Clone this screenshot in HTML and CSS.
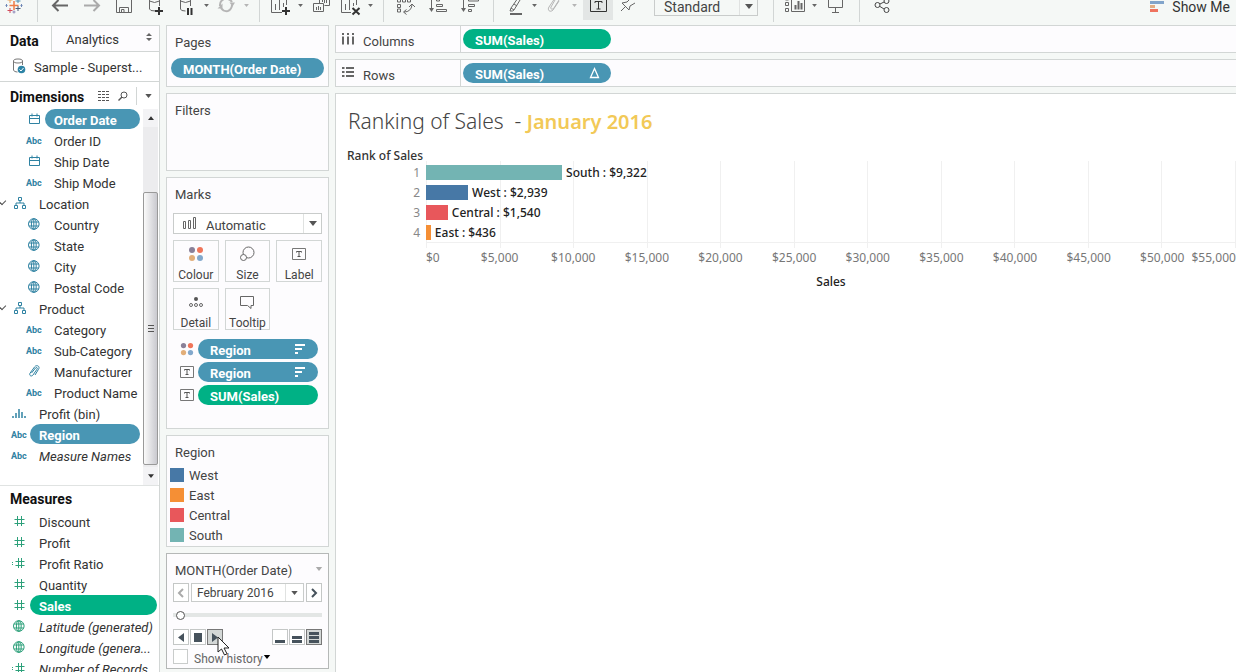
FILE: index.html
```html
<!DOCTYPE html>
<html lang="en">
<head>
<meta charset="utf-8">
<title>Ranking of Sales</title>
<link rel="stylesheet" href="styles.css">
</head>
<body>
<svg class="sprite" aria-hidden="true">
  <symbol id="caret" viewBox="0 0 8 5"><path d="M0 0h8L4 5z" fill="currentColor"/></symbol>
  <symbol id="calendar" viewBox="0 0 14 14"><path d="M2.500 3.500h10v8h-10zM2.500 6.500h10M5 1.500v3M10 1.500v3" fill="none" stroke="currentColor"/></symbol>
  <symbol id="globe" viewBox="0 0 14 14"><path d="M1.500 7a5.300 5.300 0 1 0 10.600 0a5.300 5.300 0 1 0-10.600 0M4.400 7a2.400 5.300 0 1 0 4.800 0a2.400 5.300 0 1 0-4.800 0M2 5h9.600M2 9h9.600M6.800 1.700v10.600" fill="none" stroke="currentColor"/></symbol>
  <symbol id="tree" viewBox="0 0 14 14"><path d="M5.500 1.500h3v3h-3zM1.500 9.500h3v3h-3zM9.500 9.500h3v3h-3zM7 4.500V7M3 9.500V7h8v2.500" fill="none" stroke="currentColor"/></symbol>
  <symbol id="clip" viewBox="0 0 14 14"><path d="M4.500 9L8.500 4c1-1.200 2.500-.2 1.500 1.200L6 11c-1.500 2-4.200.6-3-1.800L7.500 3c2-2.800 6-.8 4 2.300L8 11" fill="none" stroke="currentColor"/></symbol>
  <symbol id="bins" viewBox="0 0 14 14"><path d="M1 10v2M4 7v5M7 3v9M10 6v6M13 10v2" fill="none" stroke="currentColor" stroke-width="1.500"/></symbol>
  <symbol id="hash" viewBox="0 0 14 14"><path d="M5.500 2v10M9.500 2v10M2.500 5.500h10M2.500 9.500h10" fill="none" stroke="currentColor"/></symbol>
  <symbol id="calc-hash" viewBox="0 0 14 14"><path d="M6.500 2v10M9.500 2v10M3.500 5.500h9M3.500 9.500h9M-2 6.500h3M-2 8.500h3" fill="none" stroke="currentColor"/></symbol>
  <symbol id="text-box" viewBox="0 0 14 14"><path d="M.5 1.500h13v11H.5z" fill="none" stroke="#777"/><path d="M4.500 5.500v-1h5v1M7 4.500v5M5.500 9.500h3" fill="none" stroke="#555"/></symbol>
  <symbol id="dots" viewBox="0 0 16 16"><circle cx="4" cy="4" r="3" fill="#8a8098"/><circle cx="12" cy="4" r="3" fill="#f0755a"/><circle cx="4" cy="12" r="3" fill="#e2ae79"/><circle cx="12" cy="12" r="3" fill="#82a8cc"/></symbol>
  <symbol id="sort" viewBox="0 0 12 12"><path d="M1 2h10M1 6h7M1 10h3" fill="none" stroke="#fff" stroke-width="2"/></symbol>
</svg>

<header class="toolbar">
  <button class="tool logo" aria-label="Start page"><svg viewBox="0 0 32 25"><path d="M16 1v9M11.500 5.500h9" stroke="#ee7b45" stroke-width="1.500"/><path d="M20 -2v5M17.500 1h5" stroke="#4e8fb0"/><path d="M12 8v5M9.500 10.500h5" stroke="#d24c5c"/><path d="M20 6v5M17.500 8.500h5" stroke="#4b5c78"/><path d="M12 -2v5M9.500 0h5" stroke="#e9a25b"/><path d="M16 10.500v3M14.500 12h3" stroke="#8c87b8"/><path d="M8.500 4v3M7.500 5.500h2M23.500 4v3M22.500 5.500h2" stroke="#6f87b6"/></svg></button>
  <span class="divider"></span>
  <button class="tool" aria-label="Back"><svg viewBox="0 0 32 25"><path d="M24 5.500H9M14.500 0L9 5.500l5.500 5.500" stroke="#666" stroke-width="2"/></svg></button>
  <button class="tool" aria-label="Forward"><svg viewBox="0 0 32 25"><path d="M8 5.500h15M17.500 0L23 5.500 17.500 11" stroke="#aaa" stroke-width="2"/></svg></button>
  <button class="tool" aria-label="Save"><svg viewBox="0 0 32 25"><path d="M8.500-2v14.500h15V-2M11.500 12V7.500h9V12M13.500 12V9.500h2.500V12"/></svg></button>
  <button class="tool" aria-label="New data source"><svg viewBox="0 0 32 25"><path d="M9.500-2v11q0 2 6 2M19.500-2v8M9.500 1q5 3 10 0"/><path d="M19 7v8M15 11h8" stroke="#333" stroke-width="2"/></svg></button>
  <button class="tool narrow" aria-label="Pause updates"><svg viewBox="0 0 32 25"><path d="M10.500-2v11q0 2 5 2M20.500-2v8M10.500 1q5 3 10 0"/><path d="M18 8v7M21.500 8v7" stroke="#333" stroke-width="2"/></svg></button>
  <button class="more" aria-label="More"><svg><use href="#caret"/></svg></button>
  <button class="tool narrow faded" aria-label="Refresh"><svg viewBox="0 0 32 25"><path d="M10 6a7 7 0 0 1 4-7M22 5a7 7 0 0 1-4 6M11 8a7 7 0 0 0 7 3M22 2a7 7 0 0 0-4-3" stroke-width="2"/><path d="M7.500 8.500h5v-5zM19.500 2.500h5.500l-2.500 4z" fill="#b5b5b5" stroke="none"/></svg></button>
  <button class="more faded" aria-label="More"><svg><use href="#caret"/></svg></button>
  <span class="divider"></span>
  <button class="tool narrow" aria-label="New worksheet"><svg viewBox="0 0 32 25"><path d="M7.500-2v14.500H18M22.500-2v7M11.500 4v6M15.500 0v10M19.500 3v4" /><path d="M22 7v8M18 11h8" stroke="#333" stroke-width="2"/></svg></button>
  <button class="more" aria-label="More"><svg><use href="#caret"/></svg></button>
  <button class="tool duplicate" aria-label="Duplicate"><svg viewBox="0 0 32 25"><path d="M14.500 3V-2M14.500-2M24.500-2v7.500h-5M8.500 3.500h10v8h-10zM11.500 7v3M13.500 6v4M15.500 7v3M17.500 0v2M19.500 0v3M21.500 0v3"/></svg></button>
  <button class="tool narrow" aria-label="Clear sheet"><svg viewBox="0 0 32 25"><path d="M7.500-2v14.500H17M22.500-2v7M11.500 4v6M15.500 0v10M19.500 3v3"/><path d="M18.500 8l7 6.500M25.500 8l-7 6.500" stroke="#333" stroke-width="2"/></svg></button>
  <button class="more" aria-label="More"><svg><use href="#caret"/></svg></button>
  <span class="divider"></span>
  <button class="tool" aria-label="Swap rows and columns"><svg viewBox="0 0 32 25"><path d="M7.500-1v3h3v-3M12.500-1v3h3v-3M17.500-1v3h3v-3M7.500 4.500v3h3v-3zM7.500 9v3h3V9zM14 12q7 0 8-7M16.500 9.500L13.500 12l3 2.500M19 7l3-3 3 3"/></svg></button>
  <button class="tool" aria-label="Sort ascending"><svg viewBox="0 0 32 25"><path d="M9.500-2v12M14.500-1h3v2h-3zM14.500 4.500h6v2h-6zM14.500 9.500h10v2h-10z"/><path d="M7 8h5l-2.500 4z" fill="#666" stroke="none"/></svg></button>
  <button class="tool" aria-label="Sort descending"><svg viewBox="0 0 32 25"><path d="M9.500-2v12M14.500-1h10v2h-10zM14.500 4.500h6v2h-6zM14.500 9.500h3v2h-3z"/><path d="M7 8h5l-2.500 4z" fill="#666" stroke="none"/></svg></button>
  <span class="divider"></span>
  <button class="tool narrow" aria-label="Highlight"><svg viewBox="0 0 32 25"><path d="M20-2l-7 10 3 2 6-10M13 8l-1 3h2.500l1.500-1M16 4l3 2"/><path d="M12 14h12" stroke-width="2"/></svg></button>
  <button class="more" aria-label="More"><svg><use href="#caret"/></svg></button>
  <button class="tool narrow faded" aria-label="Group"><svg viewBox="0 0 32 25"><path d="M13 7l4-7M16 8l5-8c1-3-2-4-4-2l-6 9c-2 3 1 6 4 3l6-9M13 7c-1 2 1 3 3 1"/></svg></button>
  <button class="more faded" aria-label="More"><svg><use href="#caret"/></svg></button>
  <button class="tool narrow pressed" aria-label="Show mark labels"><svg viewBox="0 0 32 25"><path d="M8.500-3v14.500h16V-3" stroke="#333"/><path d="M13 3V1.500h7V3M16.500 1.500V9M14.500 9h4" stroke="#333"/></svg></button>
  <button class="tool narrow" aria-label="Pin axes"><svg viewBox="0 0 32 25"><path d="M20-2l-4 4-5 1 7 7 1-4 5-3M15 6l-5 5"/></svg></button>
  <label class="pick fit"><select aria-label="Fit"><option>Standard</option></select><span class="pick-arrow"><svg><use href="#caret"/></svg></span></label>
  <span class="divider wide"></span>
  <button class="tool narrow" aria-label="Show cards"><svg viewBox="0 0 32 25"><path d="M7.500-2v2h3v-2M7.500 2.500h3v3h-3zM7.500 8.500h3v3h-3zM13.500-2v13.500h13V-2"/><path d="M17.500 5v4.500M20.500 1v8.500M23.500 3v6.500" stroke-width="2"/></svg></button>
  <button class="more" aria-label="More"><svg><use href="#caret"/></svg></button>
  <button class="tool" aria-label="Presentation mode"><svg viewBox="0 0 32 25"><path d="M8.500-2v9.500h14V-2M15.500 8v4.500M12 12.500h7"/></svg></button>
  <span class="divider"></span>
  <button class="tool" aria-label="Share"><svg viewBox="0 0 32 25"><g stroke="#444"><circle cx="11.500" cy="5" r="2.500"/><circle cx="20.500" cy="1" r="2.500"/><circle cx="20.500" cy="10" r="2.500"/><path d="M14 4l4-2M14 6.500l4 2.500"/></g></svg></button>
  <button class="show-me"><svg viewBox="0 0 14 25"><path d="M0 1h14v3H0z" fill="#82a5cb"/><path d="M0 5h5v3H0z" fill="#e2ae85"/><path d="M0 9h8v3H0z" fill="#ef735f"/></svg><span>Show Me</span></button>
</header>

<main class="workspace">
  <aside class="data-pane">
    <div class="tabs">
      <button class="tab active">Data</button>
      <button class="tab">Analytics <svg viewBox="0 0 6 8"><path d="M0 3l3-3 3 3zM0 5l3 3 3-3z" fill="#666"/></svg></button>
    </div>
    <button class="source"><svg viewBox="0 0 14 16"><path d="M1.500 3v9c0 1 2 2 4 2M10.500 3v4M1.500 3a4.500 2 0 1 0 9 0a4.500 2 0 1 0-9 0" fill="none" stroke="#777"/><circle cx="9.500" cy="11.500" r="3.800" fill="#2e84a6"/><path d="M7.500 11.500l1.500 1.500 2.500-3" stroke="#fff" fill="none"/></svg><span>Sample - Superst...</span></button>
    <div class="pane-head">
      <h2>Dimensions</h2>
      <button aria-label="View data"><svg class="i-table" viewBox="0 0 12 10"><path d="M0 .5h12M0 3.500h12M0 6.500h12M0 9.500h12" stroke="#555" stroke-dasharray="3 1"/></svg></button>
      <button aria-label="Find"><svg class="i-find" viewBox="0 0 10 10"><circle cx="6" cy="4" r="3" fill="none" stroke="#555"/><path d="M4 6L.5 9.500" stroke="#555" stroke-width="1.500"/></svg></button>
      <button class="pane-menu" aria-label="Menu"><svg><use href="#caret"/></svg></button>
    </div>
    <div class="dimensions">
      <ul class="fields">
        <li class="child"><svg><use href="#calendar"/></svg><span class="field selected">Order Date</span></li>
        <li class="child"><i>Abc</i><span class="field">Order ID</span></li>
        <li class="child"><svg><use href="#calendar"/></svg><span class="field">Ship Date</span></li>
        <li class="child"><i>Abc</i><span class="field">Ship Mode</span></li>
        <li class="folder"><svg><use href="#tree"/></svg><span class="field">Location</span></li>
        <li class="child"><svg><use href="#globe"/></svg><span class="field">Country</span></li>
        <li class="child"><svg><use href="#globe"/></svg><span class="field">State</span></li>
        <li class="child"><svg><use href="#globe"/></svg><span class="field">City</span></li>
        <li class="child"><svg><use href="#globe"/></svg><span class="field">Postal Code</span></li>
        <li class="folder"><svg><use href="#tree"/></svg><span class="field">Product</span></li>
        <li class="child"><i>Abc</i><span class="field">Category</span></li>
        <li class="child"><i>Abc</i><span class="field">Sub-Category</span></li>
        <li class="child"><svg><use href="#clip"/></svg><span class="field">Manufacturer</span></li>
        <li class="child"><i>Abc</i><span class="field">Product Name</span></li>
        <li><svg><use href="#bins"/></svg><span class="field">Profit (bin)</span></li>
        <li><i>Abc</i><span class="field selected">Region</span></li>
        <li><i>Abc</i><span class="field generated">Measure Names</span></li>
      </ul>
      <div class="scrollbar">
        <button aria-label="Scroll up"><svg class="flip"><use href="#caret"/></svg></button>
        <div class="thumb"><span></span></div>
        <button aria-label="Scroll down"><svg><use href="#caret"/></svg></button>
      </div>
    </div>
    <h2 class="measures-head">Measures</h2>
    <ul class="fields measures">
      <li><svg><use href="#hash"/></svg><span class="field">Discount</span></li>
      <li><svg><use href="#hash"/></svg><span class="field">Profit</span></li>
      <li><svg><use href="#calc-hash"/></svg><span class="field">Profit Ratio</span></li>
      <li><svg><use href="#hash"/></svg><span class="field">Quantity</span></li>
      <li><svg><use href="#hash"/></svg><span class="field selected">Sales</span></li>
      <li><svg><use href="#globe"/></svg><span class="field generated">Latitude (generated)</span></li>
      <li><svg><use href="#globe"/></svg><span class="field generated">Longitude (genera...</span></li>
      <li><svg><use href="#calc-hash"/></svg><span class="field generated">Number of Records</span></li>
    </ul>
  </aside>

  <div class="cards">
    <section class="card pages"><h3>Pages</h3><button class="pill blue">MONTH(Order Date)</button></section>
    <section class="card filters"><h3>Filters</h3></section>
    <section class="card marks">
      <h3>Marks</h3>
      <label class="pick mark-type"><svg class="i-bars" viewBox="0 0 14 14"><path d="M.5 4.500h2v7h-2zM5.500 3.500h2v8h-2zM10.500 .5h2v11h-2z" fill="none" stroke="#666"/></svg><select aria-label="Mark type"><option>Automatic</option></select><span class="pick-arrow"><svg><use href="#caret"/></svg></span></label>
      <div class="shelf-buttons">
        <button><svg><use href="#dots"/></svg>Colour</button>
        <button><svg viewBox="0 0 16 16"><circle cx="9.500" cy="6.500" r="5.500" fill="none" stroke="#666"/><circle cx="4.500" cy="11.500" r="3" fill="#fdfcfe" stroke="#666"/></svg>Size</button>
        <button><svg viewBox="-1 -1 16 16"><use href="#text-box" width="14" height="14"/></svg>Label</button>
        <button><svg viewBox="0 0 16 16"><circle cx="8" cy="5" r="2" fill="#555"/><g fill="none" stroke="#666"><circle cx="3" cy="11" r="1.500"/><circle cx="8" cy="11" r="1.500"/><circle cx="13" cy="11" r="1.500"/></g></svg>Detail</button>
        <button><svg viewBox="0 0 16 16"><path d="M1.500 2.500h13v9H12v3l-3.500-3h-7z" fill="none" stroke="#666"/></svg>Tooltip</button>
      </div>
      <ul class="encodings">
        <li><svg><use href="#dots"/></svg><button class="pill blue">Region<svg><use href="#sort"/></svg></button></li>
        <li><svg><use href="#text-box"/></svg><button class="pill blue">Region<svg><use href="#sort"/></svg></button></li>
        <li><svg><use href="#text-box"/></svg><button class="pill green">SUM(Sales)</button></li>
      </ul>
    </section>
    <section class="card legend">
      <h3>Region</h3>
      <ul>
        <li><span class="swatch west"></span>West</li>
        <li><span class="swatch east"></span>East</li>
        <li><span class="swatch central"></span>Central</li>
        <li><span class="swatch south"></span>South</li>
      </ul>
    </section>
    <section class="card player">
      <h3>MONTH(Order Date)<svg><use href="#caret"/></svg></h3>
      <div class="stepper">
        <button class="faded" aria-label="Previous"><svg viewBox="0 0 6 10"><path d="M5 1L1 5l4 4" fill="none" stroke="#aaa" stroke-width="2"/></svg></button>
        <label class="pick"><select aria-label="Month"><option>February 2016</option></select><span class="pick-arrow"><svg><use href="#caret"/></svg></span></label>
        <button aria-label="Next"><svg viewBox="0 0 6 10"><path d="M1 1l4 4-4 4" fill="none" stroke="#46525c" stroke-width="2"/></svg></button>
      </div>
      <input class="slider" type="range" min="0" max="47" value="0" aria-label="Page">
      <div class="playback">
        <button aria-label="Play backwards"><svg viewBox="0 0 12 12"><path d="M9 2v9L3 6.500z" fill="#46525c"/></svg></button>
        <button aria-label="Stop"><svg viewBox="0 0 12 12"><path d="M2 2h8v9H2z" fill="#46525c"/></svg></button>
        <button class="on" aria-label="Play"><svg viewBox="0 0 12 12"><path d="M3 2v9l6-4.500z" fill="#46525c"/></svg></button>
        <button class="speed" aria-label="Slow"><svg viewBox="0 0 12 12"><path d="M1 9h10v3H1z" fill="#46525c"/></svg></button>
        <button aria-label="Medium"><svg viewBox="0 0 12 12"><path d="M1 5h10v3H1zM1 9h10v3H1z" fill="#46525c"/></svg></button>
        <button class="on" aria-label="Fast"><svg viewBox="0 0 12 12"><path d="M1 1h10v3H1zM1 5h10v3H1zM1 9h10v3H1z" fill="#46525c"/></svg></button>
        <svg class="cursor" viewBox="0 0 13 20"><path d="M1 1v15l3.500-3 3 6 2.500-1.200-3-5.800H12z" fill="#fff" stroke="#222"/></svg>
      </div>
      <div class="history"><input type="checkbox" id="history"><label for="history">Show history</label><svg><use href="#caret"/></svg></div>
    </section>
  </div>

  <div class="canvas">
    <section class="shelf"><h3><svg viewBox="0 0 12 12"><path d="M1 3.500v8M6 3.500v8M11 3.500v8M1 0v2M6 0v2M11 0v2" stroke="#666" stroke-width="2"/></svg>Columns</h3><button class="pill green">SUM(Sales)</button></section>
    <section class="shelf"><h3><svg viewBox="0 0 12 12"><path d="M4 1h8M4 5h8M4 9h8M0 1h2.500M0 5h2.500M0 9h2.500" stroke="#666" stroke-width="2"/></svg>Rows</h3><button class="pill blue">SUM(Sales)<svg viewBox="0 0 12 12"><path d="M7.500 1.500l4 9h-8z" fill="none" stroke="#fff" stroke-width="1.300"/></svg></button></section>
    <section class="view">
      <h1>Ranking of Sales&nbsp; - <strong>January 2016</strong></h1>
      <h4>Rank of Sales</h4>
      <div class="chart">
        <ol class="ranks"><li>1</li><li>2</li><li>3</li><li>4</li></ol>
        <div class="plot">
          <div class="gridlines"><i></i><i></i><i></i><i></i><i></i><i></i><i></i><i></i><i></i><i></i><i></i></div>
          <ul class="bars">
            <li><span class="bar south" style="width:16.8%"></span>South : $9,322</li>
            <li><span class="bar west" style="width:5.2%"></span>West : $2,939</li>
            <li><span class="bar central" style="width:2.7%"></span>Central : $1,540</li>
            <li><span class="bar east" style="width:0.6%"></span>East : $436</li>
          </ul>
        </div>
        <div class="axis"><span>$0</span><span>$5,000</span><span>$10,000</span><span>$15,000</span><span>$20,000</span><span>$25,000</span><span>$30,000</span><span>$35,000</span><span>$40,000</span><span>$45,000</span><span>$50,000</span><span>$55,000</span></div>
        <p class="axis-title">Sales</p>
      </div>
    </section>
  </div>
</main>
</body>
</html>
```
FILE: styles.css
```css
* { box-sizing: border-box; }

:root {
  --line: #d2d6d5;
  --ground: #f5f8f6;
  --card: #fdfcfe;
  --blue: #4996b4;
  --green: #00b185;
}

body {
  margin: 0;
  height: 100vh;
  overflow: hidden;
  display: flex;
  flex-direction: column;
  background: var(--ground);
  color: #333;
  font: 13px/20px Roboto, "Liberation Sans", sans-serif;
}

ul, ol { margin: 0; padding: 0; list-style: none; }
h1, h2, h3, h4, p { margin: 0; font-size: 13px; font-weight: 400; }
button, select { font: inherit; color: inherit; }
button { border: 0; padding: 0; background: none; }
svg { flex: none; overflow: visible; }
.sprite { width: 0; height: 0; position: absolute; }

.faded { color: #b5b5b5; }

/* Toolbar */
.toolbar { flex: none; display: flex; height: 25px; overflow: hidden; color: #666; }
.tool { flex: none; width: 32px; height: 20px; display: flex; justify-content: center; }
.tool.narrow { width: 28px; }
.tool.duplicate { width: 30px; }
.tool.logo { width: 37px; padding-right: 10px; }
.tool svg { width: 32px; height: 25px; fill: none; stroke: #666; }
.tool.faded svg { stroke: #b5b5b5; }
.tool.pressed { width: 30px; margin-left: 3px; background: #e3e6e5; }
.more { flex: none; width: 12px; height: 11px; display: flex; justify-content: center; align-items: center; }
.more svg { width: 5px; height: 3px; }
.divider { flex: none; width: 1px; height: 22px; margin: 0 6px 0 7px; background: var(--line); }
.logo + .divider { margin-left: 0; }
.divider.wide { margin-left: 15px; }

.pick { display: flex; border: 1px solid #c9cccb; background: #fff; }
.pick select { flex: 1; min-width: 0; appearance: none; border: 0; background: none; padding: 0 0 0 9px; outline: 0; }
.pick-arrow { width: 18px; display: flex; align-items: center; justify-content: center; border-left: 1px solid #e0e2e1; color: #555; }
.pick-arrow svg { width: 8px; height: 5px; }
.pick.fit { width: 104px; height: 26px; margin: -10px 0 0 13px; padding-top: 6px; background: none; color: #444; font-size: 14px; }
.show-me { display: flex; align-items: flex-start; gap: 8px; margin-left: auto; padding-right: 6px; color: #333; font-size: 14px; line-height: 14px; }
.show-me svg { width: 14px; height: 25px; }

/* Workspace columns */
.workspace { flex: 1; min-height: 0; display: grid; grid-template-columns: 160px 163px minmax(0, 1fr); gap: 6px; }

/* Data pane */
.data-pane { min-height: 0; overflow: hidden; background: #fff; border: 1px solid var(--line); border-width: 1px 1px 0 0; }
.tabs { display: flex; height: 26px; }
.tab { flex: 1; display: flex; justify-content: space-between; align-items: center; padding: 3px 7px 0 14px; font-size: 13px; background: var(--card); border: 1px solid var(--line); border-width: 0 0 1px 1px; }
.tab.active { flex: none; width: 51px; padding: 3px 0 0 10px; border: 0; background: #fff; font-weight: 700; font-size: 14px; color: #111; }
.tab svg { width: 6px; height: 8px; margin-bottom: 6px; }
.source { display: flex; align-items: center; gap: 8px; width: 100%; height: 30px; padding: 2px 0 0 12px; border-bottom: 1px solid var(--line); }
.source svg { width: 14px; height: 16px; margin-bottom: 4px; }
h2 { font-size: 14px; font-weight: 700; color: #111; }
.pane-head { display: flex; align-items: center; height: 27px; padding: 0 7px 0 10px; }
.pane-head h2 { flex: 1; padding-top: 2px; }
.pane-head button { display: flex; align-items: center; margin-left: 8px; height: 18px; color: #555; }
.i-table { width: 12px; height: 10px; }
.i-find { width: 10px; height: 10px; }
.pane-head .pane-menu { padding-left: 8px; border-left: 1px solid var(--line); }
.pane-menu svg { width: 7px; height: 4px; }
.dimensions { display: flex; height: 377px; border-bottom: 1px solid #e0e3e2; }
.fields { flex: 1; min-width: 0; --tone: #2f82a2; --pill: var(--blue); }
.fields.measures { --tone: #2ca07a; --pill: var(--green); }
.fields li { display: flex; align-items: center; height: 21px; padding: 0 3px 1px 12px; }
.fields li.child { padding-left: 27px; }
.fields li.folder { padding-left: 0; }
.fields li.folder::before { content: ""; width: 5px; height: 5px; margin: -4px 7px 0 -1px; border: solid #555; border-width: 0 1px 1px 0; transform: rotate(45deg); }
.fields svg { width: 14px; height: 14px; color: var(--tone); }
.fields li.folder svg { margin-left: 1px; margin-right: -1px; }
.fields i { flex: none; width: 16px; margin: 1px -1px 0; color: var(--tone); font-size: 9px; font-style: normal; font-weight: 700; }
.field { flex: 1; height: 20px; margin-left: 4px; padding: 2px 0 0 9px; white-space: nowrap; color: #333; border-radius: 10px; line-height: 20px; }
.field.selected { background: var(--pill); color: #fff; font-weight: 700; }
.field.generated { font-style: italic; }
.scrollbar { width: 15px; margin-right: 1px; display: flex; flex-direction: column; background: #ececee; }
.scrollbar button { height: 18px; display: flex; justify-content: center; align-items: center; background: #f3f3f5; color: #333; }
.scrollbar svg { width: 6px; height: 4px; }
.flip { transform: scaleY(-1); }
.thumb { flex: 1; display: flex; justify-content: center; align-items: center; margin: 65px 0 2px; border: 1px solid #999; border-radius: 2px; background: linear-gradient(90deg, #fafafa, #c9c9cf); }
.thumb span { width: 6px; height: 8px; background: repeating-linear-gradient(#555 0 1px, transparent 1px 3px); }
.measures-head { padding: 3px 10px 0; height: 25px; }
.fields.measures li { padding-right: 2px; }

/* Cards */
.cards { display: flex; flex-direction: column; gap: 6px; }
.card { border: 1px solid var(--line); background: var(--card); color: #444; padding: 7px 6px; }
.card h3 { padding-left: 2px; }
.pill { display: flex; align-items: center; justify-content: space-between; height: 20px; padding: 3px 12px 0; border-radius: 10px; color: #fff; font-weight: 700; }
.pill svg { width: 12px; height: 12px; margin-bottom: 3px; }
.blue { background: var(--blue); }
.green { background: var(--green); }
.card.pages { padding: 7px 4px 8px; }
.pages h3 { padding-left: 4px; }
.pages .pill { width: 100%; margin-top: 5px; }
.filters { height: 78px; }
.marks { height: 252px; }
.mark-type { height: 21px; margin-top: 8px; padding-left: 9px; }
.mark-type select { padding-top: 2px; }
.i-bars { width: 14px; height: 14px; margin-top: 3px; }
.shelf-buttons { display: grid; grid-template-columns: repeat(3, 1fr); gap: 6px; margin-top: 6px; }
.shelf-buttons button { height: 42px; display: flex; flex-direction: column; align-items: center; border: 1px solid var(--line); padding-top: 5px; font-size: 12px; line-height: 14px; gap: 6px; }
.shelf-buttons svg { width: 16px; height: 16px; }
.encodings { display: grid; gap: 3px; margin: 9px 4px 0 7px; }
.encodings li { display: flex; align-items: center; gap: 4px; }
.encodings li > svg { width: 14px; height: 14px; }
.encodings .pill { flex: 1; }
.legend { padding: 7px 3px 1px; }
.legend h3 { padding-left: 5px; margin-bottom: 2px; }
.legend li { display: flex; align-items: center; gap: 5px; height: 20px; padding-top: 1px; }
.swatch { width: 14px; height: 14px; margin-bottom: 2px; }
.west { background: #4778a6; }
.east { background: #f58f35; }
.central { background: #e8575b; }
.south { background: #73b4b3; }

.player { border-color: #b5b8b7; height: 116px; }
.player h3 { display: flex; justify-content: space-between; align-items: center; margin-right: -1px; }
.player h3 svg { width: 8px; height: 4px; margin-bottom: 4px; color: #aaa; }
.stepper { display: flex; gap: 2px; margin-top: 2px; }
.stepper button, .playback button { display: flex; align-items: center; justify-content: center; width: 16px; border: 1px solid #c4c7c6; background: #fff; }
.stepper svg { width: 6px; height: 10px; }
.stepper .pick { flex: 1; height: 19px; }
.stepper select { height: 17px; padding: 1px 0 0 5px; font-size: 12px; line-height: 16px; }
.stepper .pick-arrow svg { width: 7px; height: 4px; }
.slider { appearance: none; display: block; width: 100%; height: 10px; margin: 8px 0; padding: 0 3px; background: linear-gradient(#e3e6e5, #e3e6e5) center / 100% 4px no-repeat; }
.slider::-webkit-slider-thumb { appearance: none; width: 9px; height: 9px; border: 1px solid #555; border-radius: 50%; background: #fff; }
.playback { position: relative; display: flex; gap: 1px; margin-top: 9px; }
.playback button { height: 16px; }
.playback button svg { width: 12px; height: 12px; }
.playback .on { background: #d3d7d6; border-color: #777; }
.playback .speed { margin-left: auto; }
.playback svg.cursor { position: absolute; left: 44px; top: 7px; width: 13px; height: 20px; }
.history { display: flex; align-items: center; margin-top: 4px; font-size: 12px; color: #666; }
.history input { appearance: none; width: 15px; height: 15px; margin: 0 6px 0 0; border: 1px solid #c9cccb; background: #fff; }
.history label { height: 15px; line-height: 20px; }
.history svg { width: 8px; height: 4px; color: #000; }

/* Sheet */
.canvas { display: flex; flex-direction: column; gap: 6px; min-width: 0; }
.shelf { display: flex; height: 28px; border: 1px solid var(--line); border-right: 0; background: var(--card); }
.shelf h3 { display: flex; align-items: center; gap: 9px; width: 125px; padding: 5px 0 0 6px; border-right: 1px solid var(--line); color: #444; }
.shelf h3 svg { width: 12px; height: 12px; margin-bottom: 6px; }
.shelf .pill { width: 148px; margin: 3px 2px; }
.view { flex: 1; padding: 13px 0 0 11px; border: 1px solid var(--line); border-width: 1px 0 0 1px; background: #fff; font-family: "Noto Sans", "Open Sans", sans-serif; font-size: 12px; }
h1 { padding-left: 1px; font-size: 21px; line-height: 28px; font-weight: 300; color: #444; }
h1 strong { font-size: 20px; font-weight: 600; color: #f2c957; }
h4 { margin-top: 11px; font-size: 12px; font-weight: 500; line-height: 18px; color: #333; }
.chart { display: grid; grid-template-columns: 79px minmax(0, 1fr); margin-top: -4px; color: #222; }
.ranks { padding: 2px 6px 0 0; text-align: right; color: #888; }
.ranks, .bars { line-height: 20px; }
.plot { display: grid; height: 87px; }
.plot > * { grid-area: 1 / 1; }
.gridlines { display: flex; border-right: 1px solid #f0f0f0; background: linear-gradient(#f0f0f0, #f0f0f0) 0 81px / 100% 1px no-repeat; }
.gridlines i { flex: 1; border-left: 1px solid #f0f0f0; }
.bars { padding-top: 1px; font-weight: 500; }
.bars li { display: flex; align-items: center; gap: 4px; height: 20px; padding-top: 1px; white-space: nowrap; }
.bar { height: 15px; }
.axis { grid-column: 2; display: flex; justify-content: space-between; color: #777; }
.axis span { flex: none; width: 0; display: flex; justify-content: center; white-space: nowrap; }
.axis span:first-child { justify-content: flex-start; }
.axis span:last-child { justify-content: flex-end; }
.axis-title { grid-column: 2; margin-top: 4px; text-align: center; font-size: 12px; font-weight: 500; }
```
